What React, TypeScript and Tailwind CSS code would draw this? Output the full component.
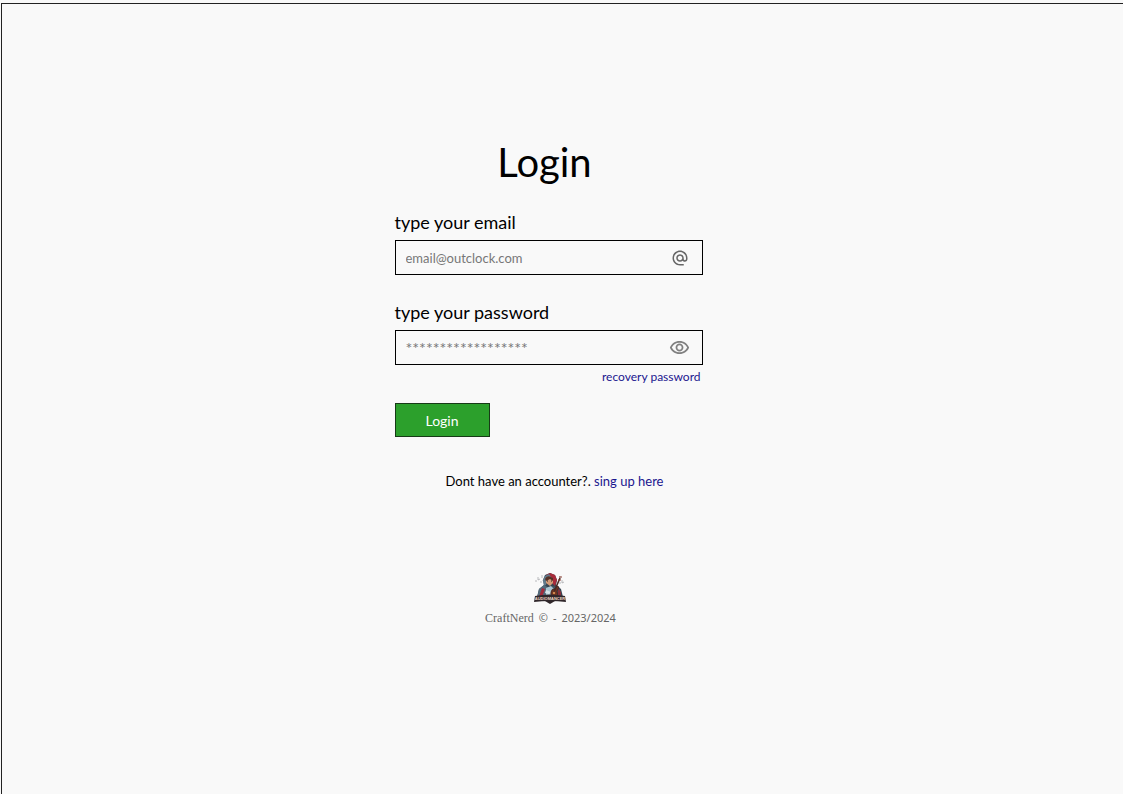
import { useState } from "react";
import type { ReactNode } from "react";
import { MdAlternateEmail, MdOutlineRemoveRedEye } from "react-icons/md";

type FieldProps = {
  id: string;
  label: string;
  type: string;
  placeholder: string;
  placeholderSize: string;
  children: ReactNode;
};

function Field({ id, label, type, placeholder, placeholderSize, children }: FieldProps) {
  return (
    <div>
      <label htmlFor={id} className="block text-[18px] leading-7">
        {label}
      </label>
      <div className="mt-1 flex h-[35px] items-center border border-black pr-3">
        <input
          id={id}
          type={type}
          placeholder={placeholder}
          className={`h-full min-w-0 flex-1 bg-transparent px-2.5 text-gray-700 outline-none placeholder:text-[#777777] ${placeholderSize}`}
        />
        {children}
      </div>
    </div>
  );
}

function Logo() {
  return (
    <svg viewBox="0 0 32 32" className="h-8 w-8" role="img" aria-label="Audiomancer">
      <path d="M2 8v2M4 5v3l2-1M8 3v3M6 10h2M9 8v1M26 4v2M28 8v3l2-1M25 11h2" stroke="#a8aaad" strokeWidth=".8" fill="none" />
      <path d="M11 3 16 1l5 2 2 5-1 5 5 4 2 8H3l2-8 5-4-1-5z" fill="#364450" />
      <path d="M16 1l5 2 2 5-2 6-3-3-1-6-5-2z" fill="#a72b3a" />
      <path d="M11 4l4-2 2 3-4 3-1 5-2 1-1-6z" fill="#60798b" />
      <path d="M12 6q4-3 7 1v4l-3 3-4-3z" fill="#d19a77" />
      <path d="M11 7q2-5 8-1v3l-3-2-4 2z" fill="#563126" />
      <path d="M13 9h1M17 9h1" stroke="#2c2325" strokeWidth="1" />
      <path d="M5 17l5-4 5 3-2 10H3z" fill="#526b7c" />
      <path d="M8 16l3 1-3 8H5z" fill="#a12c3c" />
      <path d="M18 14l6 1 3 5v5h-9z" fill="#455866" />
      <path d="M24 16l3 4v5h-3z" fill="#86303b" />
      <path d="M12 16l5-2 3 3-1 8h-7z" fill="#a9c5d1" />
      <path d="M12 18l5 2-2 2-4-1z" fill="#d8e3e7" />
      <path d="M17 20q1-4 4-3l2-3 2 1-2 4q2 4-2 6-5 0-4-5z" fill="#713521" stroke="#35201e" strokeWidth=".7" />
      <path d="M20 20 26 6" stroke="#482a25" strokeWidth="1.6" />
      <path d="M25 5h3M24 8h3" stroke="#8a3c31" strokeWidth="1" />
      <circle cx="20" cy="21" r="1.2" fill="#d08950" />
      <path d="M1 24q15-3 30 0l1 6q-16-2-32 0z" fill="#30272b" />
      <path d="M11 29h10l-5 3z" fill="#30272b" />
      <text x="16" y="28" textAnchor="middle" fontSize="4" fontWeight="700" fontFamily="Liberation Sans, sans-serif" fill="#ecd6c6">
        AUDIOMANCER
      </text>
    </svg>
  );
}

export default function App() {
  const [visible, setVisible] = useState(false);

  return (
    <div className="min-h-screen bg-[#f9f9f9] pt-[3px] pl-px font-['Lato',sans-serif] text-black">
      <main className="flex min-h-[791px] flex-col items-center border-t border-l border-[#222222] pt-[134px] pr-7">
        <form className="flex w-full max-w-[308px] flex-col" onSubmit={(e) => e.preventDefault()}>
          <h1 className="pr-2 text-center text-[40px] leading-12">Login</h1>
          <div className="mt-[22px] flex flex-col gap-[23px]">
            <Field
              id="email"
              label="type your email"
              type="email"
              placeholder="email@outclock.com"
              placeholderSize="text-[13px]"
            >
              <MdAlternateEmail className="mr-px h-[18px] w-[18px] text-[#666666]" aria-hidden="true" />
            </Field>
            <Field
              id="password"
              label="type your password"
              type={visible ? "text" : "password"}
              placeholder="******************"
              placeholderSize="text-[16px]"
            >
              <button type="button" aria-label="Show password" onClick={() => setVisible(!visible)}>
                <MdOutlineRemoveRedEye className="h-[21px] w-[21px] text-[#808080]" />
              </button>
            </Field>
          </div>
          <a href="#recovery" className="mt-0.5 self-end pr-0.5 text-[12px] leading-5 text-[#1b168f]">
            recovery password
          </a>
          <button type="submit" className="mt-4 h-[34px] w-[95px] border border-[#173b17] bg-[#2ca02c] text-[14px] text-white">
            Login
          </button>
          <p className="mt-[34px] pl-3 text-center text-[13px] leading-5">
            Dont have an accounter?.{" "}
            <a href="#signup" className="text-[#1b168f]">
              sing up here
            </a>
          </p>
        </form>
        <footer className="mt-[81px] flex flex-col items-center pl-1">
          <Logo />
          <p className="mt-1 flex gap-[5px] text-[11px] leading-5 text-[#666666]">
            <span className="font-['Liberation_Serif',serif] text-[12px]">CraftNerd</span>
            <span className="font-['Noto_Sans',sans-serif]">©</span>
            <span className="font-['Noto_Sans',sans-serif]">-</span>
            <span className="font-['Noto_Sans',sans-serif]">2023/2024</span>
          </p>
        </footer>
      </main>
    </div>
  );
}
